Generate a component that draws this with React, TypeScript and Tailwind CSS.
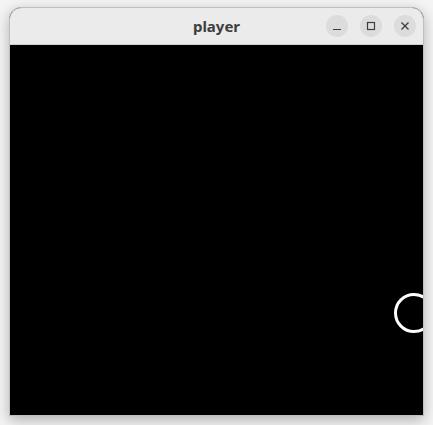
import React from "react";

const App: React.FC = () => {
  return (
    <div className="w-[433px] h-[425px] bg-[#f4f4f4] pl-[9px] pt-[7px] overflow-hidden">
      {/* Window */}
      <div className="w-[415px] h-[409px] flex flex-col border border-[#bfbfbf] rounded-t-[12px] overflow-hidden shadow-[0_4px_14px_rgba(0,0,0,0.28)] bg-black">
        {/* Title bar */}
        <div className="relative h-[37px] shrink-0 bg-[#ebebeb] border-b border-[#cfcfcf] flex items-center justify-center">
          <span
            className="text-[15px] font-bold text-[#3d3d3d] leading-none"
            style={{ fontFamily: '"Noto Sans", "DejaVu Sans", sans-serif' }}
          >
            player
          </span>
          <div className="absolute right-[7px] top-[7px] flex gap-[12px]">
            <button className="w-[22px] h-[22px] rounded-full bg-[#dcdcdc] flex items-center justify-center">
              <svg width="10" height="10" viewBox="0 0 10 10">
                <path d="M1 8.5h8" stroke="#3d3d3d" strokeWidth="1.2" />
              </svg>
            </button>
            <button className="w-[22px] h-[22px] rounded-full bg-[#dcdcdc] flex items-center justify-center">
              <svg width="10" height="10" viewBox="0 0 10 10">
                <rect x="1.5" y="1.5" width="7" height="7" fill="none" stroke="#3d3d3d" strokeWidth="1.2" />
              </svg>
            </button>
            <button className="w-[22px] h-[22px] rounded-full bg-[#dcdcdc] flex items-center justify-center">
              <svg width="10" height="10" viewBox="0 0 10 10">
                <path d="M1.5 1.5l7 7M8.5 1.5l-7 7" stroke="#3d3d3d" strokeWidth="1.3" />
              </svg>
            </button>
          </div>
        </div>
        {/* Canvas */}
        <div className="relative flex-1 bg-black overflow-hidden">
          <div className="absolute left-[384px] top-[248px] w-[40px] h-[40px] rounded-full border-[3px] border-white" />
        </div>
      </div>
    </div>
  );
};

export default App;
